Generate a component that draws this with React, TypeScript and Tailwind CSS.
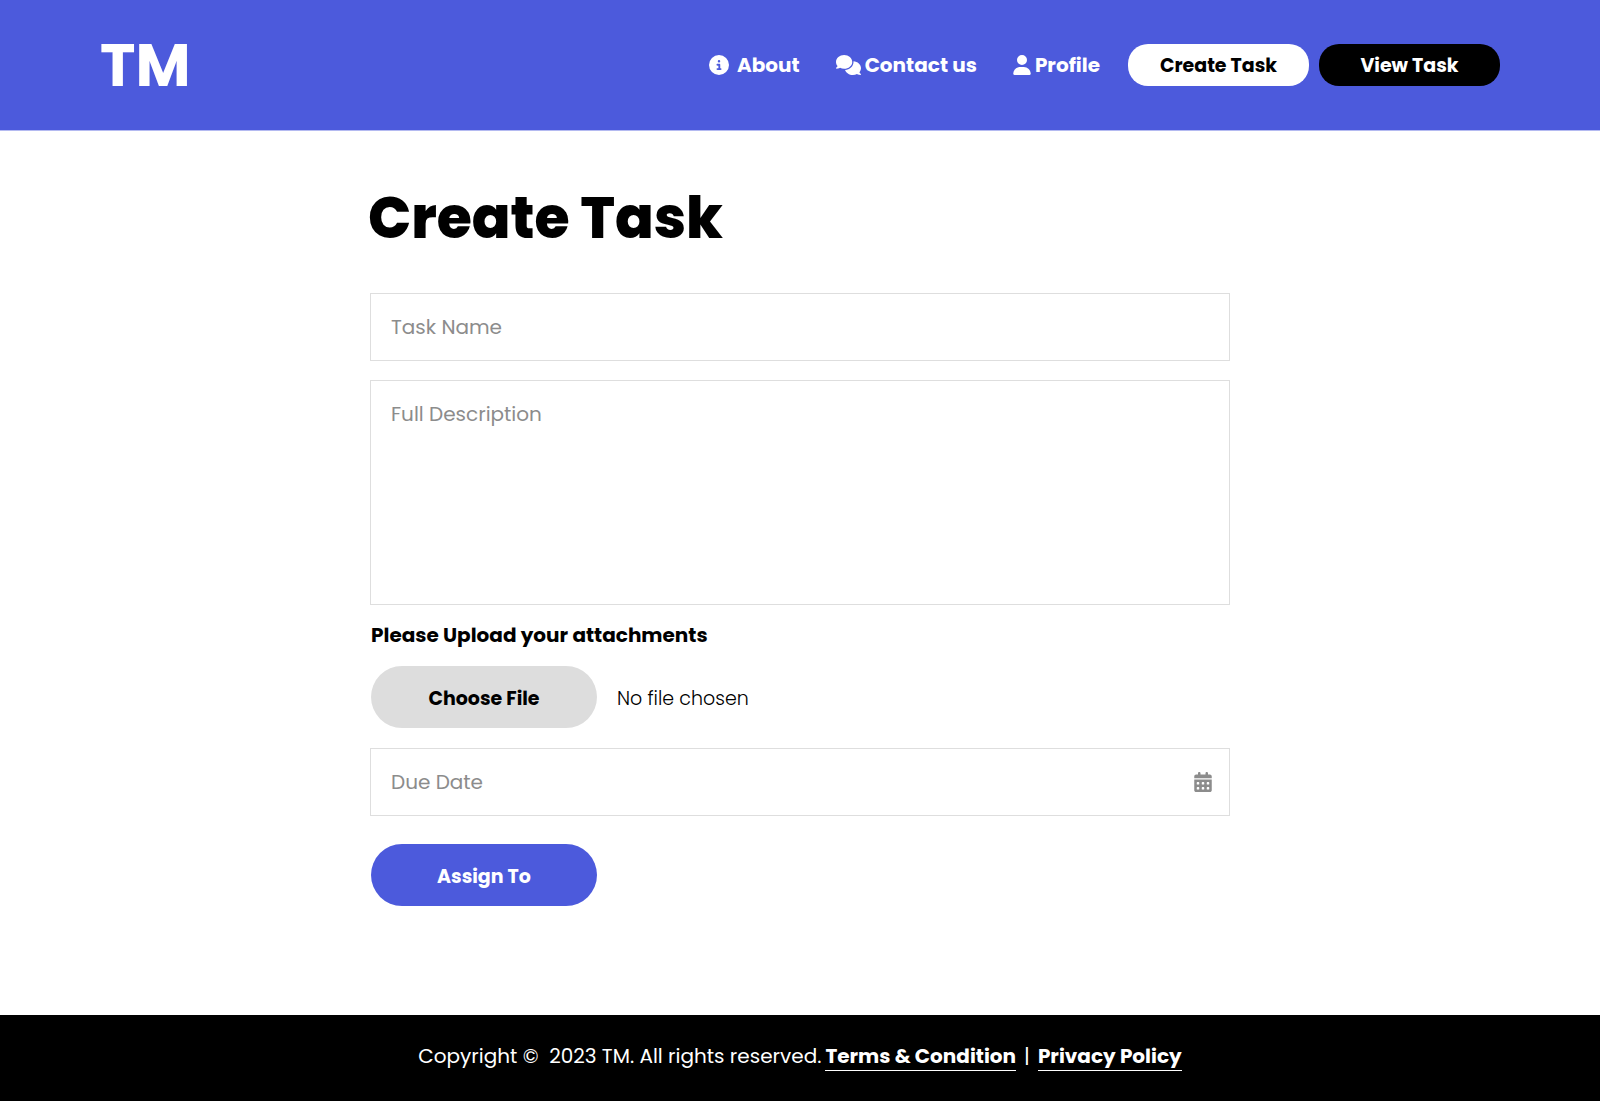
import { FaCalendarDays, FaCircleInfo, FaComments, FaUser } from 'react-icons/fa6';

const fieldClass =
  'block w-full border border-[#dedede] bg-white px-5 text-xl text-black outline-none placeholder:text-[#8c8c8c] placeholder:opacity-100 focus:border-[#4c5adc]';

function Header() {
  return (
    <header className="flex h-[131px] items-center justify-between border-b border-[#b4baf1] bg-[#4c5adc] px-[100px] text-white">
      <a href="#home" aria-label="TM home" className="text-6xl leading-none font-bold">
        TM
      </a>
      <nav className="flex items-center text-xl font-bold">
        <a href="#about" className="mr-9 flex items-center gap-2">
          <FaCircleInfo className="size-5" />
          About
        </a>
        <a href="#contact" className="mr-9 flex items-center gap-1">
          <FaComments className="h-5 w-[25px]" />
          Contact us
        </a>
        <a href="#profile" className="mr-7 flex items-center gap-1">
          <FaUser className="h-5 w-[18px]" />
          Profile
        </a>
        <div className="flex gap-2.5 text-[19px]">
          <button
            type="button"
            className="h-[42px] w-[181px] rounded-[20px] bg-white pt-0.5 text-black"
          >
            Create Task
          </button>
          <button
            type="button"
            className="h-[42px] w-[181px] rounded-[20px] bg-black pt-0.5 text-white"
          >
            View Task
          </button>
        </div>
      </nav>
    </header>
  );
}

function TaskForm() {
  return (
    <form className="mx-auto w-full max-w-[860px]" onSubmit={(event) => event.preventDefault()}>
      <h1 className="-ml-0.5 pt-12 text-[57px] leading-[78px] font-extrabold">Create Task</h1>
      <input
        type="text"
        aria-label="Task Name"
        placeholder="Task Name"
        className={`${fieldClass} mt-9 h-[68px]`}
      />
      <textarea
        aria-label="Full Description"
        placeholder="Full Description"
        className={`${fieldClass} mt-[19px] h-[225px] resize-none py-[19px]`}
      />
      <div className="px-px pt-4">
        <p id="attachments" className="text-xl leading-7 font-bold">
          Please Upload your attachments
        </p>
        <div className="mt-[17px] flex items-center gap-5 text-[19px]">
          <label
            htmlFor="task-file"
            className="flex h-[62px] w-[226px] cursor-pointer items-center justify-center rounded-full bg-[#dddddd] pt-1 font-bold"
          >
            Choose File
          </label>
          <input id="task-file" type="file" aria-describedby="attachments" className="sr-only" />
          <span className="pt-1 font-light">No file chosen</span>
        </div>
      </div>
      <div className="relative mt-5">
        <input
          type="text"
          aria-label="Due Date"
          placeholder="Due Date"
          className={`${fieldClass} h-[68px] pr-14`}
        />
        <button
          type="button"
          aria-label="Open calendar"
          className="absolute inset-y-0 right-[18px] text-[#8c8c8c]"
        >
          <FaCalendarDays className="h-5 w-[18px]" />
        </button>
      </div>
      <div className="px-px pt-7">
        <button
          type="submit"
          className="block h-[62px] w-[226px] rounded-full bg-[#4c5adc] pt-1 text-[19px] font-bold text-white"
        >
          Assign To
        </button>
      </div>
    </form>
  );
}

function Footer() {
  return (
    <footer className="flex min-h-[86px] items-center justify-center bg-black pb-1 text-xl text-white">
      <p>
        Copyright ©&nbsp; 2023 TM. All rights reserved.
        <a href="#terms" className="ml-1 border-b border-white font-bold">
          Terms &amp; Condition
        </a>
        <span className="mx-2">|</span>
        <a href="#privacy" className="border-b border-white font-bold">
          Privacy Policy
        </a>
      </p>
    </footer>
  );
}

export default function App() {
  return (
    <div className="flex min-h-screen flex-col bg-white font-['Poppins','Inter',sans-serif] text-black">
      <Header />
      <main className="flex-1 pb-[108px]">
        <TaskForm />
      </main>
      <Footer />
    </div>
  );
}
